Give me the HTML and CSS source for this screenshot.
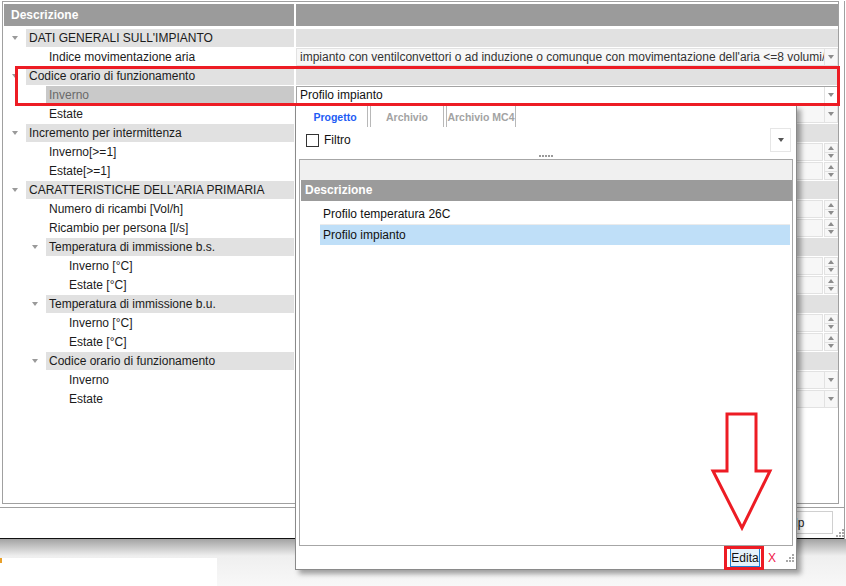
FILE: index.html
```html
<!doctype html>
<html>
  <head>
    <meta charset="utf-8" />
    <title>Codice orario di funzionamento</title>
    <link rel="stylesheet" href="styles.css">
  </head>
  <body>
    <div class="frame">
      <div class="grid">
        <div class="head"><div class="hname">Descrizione</div><div class="hval"></div></div>

        <div class="row group l1"><div class="name"><span class="tw"><i class="caret"></i></span><span class="lbl">DATI GENERALI SULL'IMPIANTO</span></div><div class="val"></div></div>
        <div class="row l1"><div class="name"><span class="tw"></span><span class="lbl">Indice movimentazione aria</span></div><div class="val"><div class="combo"><span class="txt">impianto con ventilconvettori o ad induzione o comunque con movimentazione dell'aria &lt;=8 volumi/h</span><span class="drop"><i class="tri-d"></i></span></div></div></div>
        <div class="row group l1"><div class="name"><span class="tw"><i class="caret"></i></span><span class="lbl">Codice orario di funzionamento</span></div><div class="val"></div></div>
        <div class="row l1 sel"><div class="name"><span class="tw"></span><span class="lbl">Inverno</span></div><div class="val"><div class="combo active"><span class="txt">Profilo impianto</span><span class="drop"><i class="tri-d"></i></span></div></div></div>
        <div class="row l1"><div class="name"><span class="tw"></span><span class="lbl">Estate</span></div><div class="val"><div class="combo"><span class="txt"></span><span class="drop"><i class="tri-d"></i></span></div></div></div>

        <div class="row group l1"><div class="name"><span class="tw"><i class="caret"></i></span><span class="lbl">Incremento per intermittenza</span></div><div class="val"></div></div>
        <div class="row l1"><div class="name"><span class="tw"></span><span class="lbl">Inverno[&gt;=1]</span></div><div class="val"><div class="spin"><span class="field"></span><span class="btns"><b><i class="tri-u"></i></b><b><i class="tri-d"></i></b></span></div></div></div>
        <div class="row l1"><div class="name"><span class="tw"></span><span class="lbl">Estate[&gt;=1]</span></div><div class="val"><div class="spin"><span class="field"></span><span class="btns"><b><i class="tri-u"></i></b><b><i class="tri-d"></i></b></span></div></div></div>

        <div class="row group l1"><div class="name"><span class="tw"><i class="caret"></i></span><span class="lbl">CARATTERISTICHE DELL'ARIA PRIMARIA</span></div><div class="val"></div></div>
        <div class="row l1"><div class="name"><span class="tw"></span><span class="lbl">Numero di ricambi [Vol/h]</span></div><div class="val"><div class="spin"><span class="field"></span><span class="btns"><b><i class="tri-u"></i></b><b><i class="tri-d"></i></b></span></div></div></div>
        <div class="row l1"><div class="name"><span class="tw"></span><span class="lbl">Ricambio per persona [l/s]</span></div><div class="val"><div class="spin"><span class="field"></span><span class="btns"><b><i class="tri-u"></i></b><b><i class="tri-d"></i></b></span></div></div></div>

        <div class="row group l2"><div class="name"><span class="tw"><i class="caret"></i></span><span class="lbl">Temperatura di immissione b.s.</span></div><div class="val"></div></div>
        <div class="row l2"><div class="name"><span class="tw"></span><span class="lbl">Inverno [°C]</span></div><div class="val"><div class="spin"><span class="field"></span><span class="btns"><b><i class="tri-u"></i></b><b><i class="tri-d"></i></b></span></div></div></div>
        <div class="row l2"><div class="name"><span class="tw"></span><span class="lbl">Estate [°C]</span></div><div class="val"><div class="spin"><span class="field"></span><span class="btns"><b><i class="tri-u"></i></b><b><i class="tri-d"></i></b></span></div></div></div>

        <div class="row group l2"><div class="name"><span class="tw"><i class="caret"></i></span><span class="lbl">Temperatura di immissione b.u.</span></div><div class="val"></div></div>
        <div class="row l2"><div class="name"><span class="tw"></span><span class="lbl">Inverno [°C]</span></div><div class="val"><div class="spin"><span class="field"></span><span class="btns"><b><i class="tri-u"></i></b><b><i class="tri-d"></i></b></span></div></div></div>
        <div class="row l2"><div class="name"><span class="tw"></span><span class="lbl">Estate [°C]</span></div><div class="val"><div class="spin"><span class="field"></span><span class="btns"><b><i class="tri-u"></i></b><b><i class="tri-d"></i></b></span></div></div></div>

        <div class="row group l2"><div class="name"><span class="tw"><i class="caret"></i></span><span class="lbl">Codice orario di funzionamento</span></div><div class="val"></div></div>
        <div class="row l2"><div class="name"><span class="tw"></span><span class="lbl">Inverno</span></div><div class="val"><div class="combo"><span class="txt"></span><span class="drop"><i class="tri-d"></i></span></div></div></div>
        <div class="row l2"><div class="name"><span class="tw"></span><span class="lbl">Estate</span></div><div class="val"><div class="combo"><span class="txt"></span><span class="drop"><i class="tri-d"></i></span></div></div></div>
      </div>
      <div class="footer">
        <button class="help">Help</button>
        <svg class="grip" width="8" height="8"><rect x="6" y="0" width="2" height="2"/><rect x="3" y="3" width="2" height="2"/><rect x="6" y="3" width="2" height="2"/><rect x="0" y="6" width="2" height="2"/><rect x="3" y="6" width="2" height="2"/><rect x="6" y="6" width="2" height="2"/></svg>
      </div>
    </div>
    <div class="desk">
      <div class="taskbar"><span class="tick"></span></div>
    </div>

    <!-- dropdown of the selected cell -->
    <div class="popup">
      <div class="tabs">
        <span class="tab on">Progetto</span>
        <span class="tab">Archivio</span>
        <span class="tab">Archivio MC4</span>
      </div>
      <div class="filter">
        <span class="check"></span><span class="flabel">Filtro</span>
        <span class="fdrop"><i class="tri-d dark"></i></span>
      </div>
      <div class="splitter"><i></i><i></i><i></i><i></i><i></i></div>
      <div class="list">
        <div class="ltop"></div>
        <div class="lhead">Descrizione</div>
        <div class="item">Profilo temperatura 26C</div>
        <div class="item picked">Profilo impianto</div>
      </div>
      <div class="pbar">
        <button class="edit">Edita</button>
        <span class="close">X</span>
        <svg class="grip" width="8" height="8"><rect x="6" y="0" width="2" height="2"/><rect x="3" y="3" width="2" height="2"/><rect x="6" y="3" width="2" height="2"/><rect x="0" y="6" width="2" height="2"/><rect x="3" y="6" width="2" height="2"/><rect x="6" y="6" width="2" height="2"/></svg>
      </div>
    </div>

    <!-- red annotations -->
    <div class="note note-row"></div>
    <div class="note note-edit"></div>
    <svg class="note-arrow" width="66" height="124" viewBox="710 410 66 124">
      <polygon points="727,414 756,414 756,471 770,471 742,528 713,471 727,471" fill="none" stroke="#ed1c24" stroke-width="3" />
    </svg>
  </body>
</html>
```

FILE: styles.css
```css
body {
  margin: 0;
  width: 846px;
  height: 586px;
  overflow: hidden;
  position: relative;
  background: #fff;
  font-family: "Liberation Sans", Arial, sans-serif;
  font-size: 12px;
  color: #1b1b1b;
}

.frame {
  width: 844px;
  border-right: 1px solid #a0a0a0;
}

.grid {
  margin: 1px 0 0 2px;
  width: 837px;
  height: 503px;
  box-sizing: border-box;
  border: 1px solid #a0a0a0;
  padding: 2px 0 0 1px;
}

.head {
  display: flex;
  height: 22px;
  margin-bottom: 3px;
}

.hname {
  width: 290px;
  background: #9b9b9b;
  color: #fff;
  font-weight: bold;
  line-height: 22px;
  padding-left: 7px;
  box-sizing: border-box;
}

.hval {
  flex: 1;
  margin-left: 2px;
  background: #9b9b9b;
}

.row {
  display: flex;
  height: 18px;
  margin-bottom: 1px;
}

.name {
  width: 290px;
  display: flex;
}

.tw {
  display: flex;
  align-items: center;
  justify-content: flex-end;
  padding-right: 8px;
  box-sizing: border-box;
  flex-shrink: 0;
}

.group.l1 .tw { width: 22px; }
.l1 .tw { width: 42px; }
.group.l2 .tw { width: 42px; }
.l2 .tw { width: 62px; }

.caret {
  width: 0;
  height: 0;
  border-left: 3.5px solid transparent;
  border-right: 3.5px solid transparent;
  border-top: 4px solid #9a9a9a;
}

.lbl {
  flex: 1;
  padding-left: 3px;
  line-height: 18px;
  white-space: nowrap;
  overflow: hidden;
}

.val {
  flex: 1;
  margin-left: 2px;
  min-width: 0;
}

.group .lbl,
.group .val {
  background: #e1e1e1;
}

.sel .lbl {
  background: #c9c9c9;
  color: #6a6a6a;
}

/* value editors */
.combo {
  display: flex;
  height: 18px;
  box-sizing: border-box;
  border: 1px solid #e2e2e2;
  background: #f7f7f7;
  color: #333;
}

.combo.active {
  background: #fff;
  border-color: #a3a3a3;
  color: #111;
}

.combo .txt {
  flex: 1;
  padding-left: 3px;
  line-height: 16px;
  white-space: nowrap;
  overflow: hidden;
}

.combo .drop {
  width: 12px;
  border-left: 1px solid #e2e2e2;
  display: flex;
  align-items: center;
  justify-content: center;
}

.tri-d,
.tri-u {
  width: 0;
  height: 0;
  border-left: 3.5px solid transparent;
  border-right: 3.5px solid transparent;
}

.tri-d { border-top: 4px solid #8c8c8c; }
.tri-u { border-bottom: 4px solid #8c8c8c; }
.tri-d.dark { border-top-color: #555; }

.spin {
  display: flex;
  height: 18px;
}

.spin .field {
  flex: 1;
  border: 1px solid #e2e2e2;
  background: #f7f7f7;
}

.spin .btns {
  width: 14px;
  margin-left: 1px;
  display: flex;
  flex-direction: column;
}

.spin .btns b {
  flex: 1;
  border: 1px solid #e2e2e2;
  background: #f7f7f7;
  display: flex;
  align-items: center;
  justify-content: center;
}

.spin .btns b + b {
  border-top: none;
}

.footer {
  margin-top: 3px;
  height: 32px;
  box-sizing: border-box;
  border-top: 1px solid #a0a0a0;
  border-bottom: 1px solid #111;
  display: flex;
  justify-content: flex-end;
  align-items: flex-start;
  padding: 3px 11px 0 0;
  position: relative;
}

.help {
  width: 82px;
  height: 23px;
  background: #fff;
  border: 1px solid #d0d0d0;
  font: inherit;
  color: #222;
}

.grip {
  fill: #a8a8a8;
}

.footer .grip {
  position: absolute;
  right: 0;
  bottom: 1px;
}

.desk {
  height: 47px;
  padding-top: 17px;
  box-sizing: border-box;
  background: linear-gradient(#a3a3a3, #efefef 17px, #f8f8f8);
}

.taskbar {
  width: 217px;
  height: 30px;
  background: #fff;
}

.tick {
  display: block;
  width: 2px;
  height: 5px;
  margin-top: 2px;
  background: #e8a02a;
}

/* popup */
.popup {
  position: absolute;
  left: 295px;
  top: 105px;
  width: 502px;
  height: 465px;
  box-sizing: border-box;
  border: 1px solid #8a8a8a;
  background: #fff;
  box-shadow: 4px 4px 5px rgba(0, 0, 0, 0.35);
  display: flex;
  flex-direction: column;
}

.tabs {
  height: 21px;
  display: flex;
  padding-left: 7px;
}

.tab {
  font-size: 10.5px;
  font-weight: bold;
  color: #a3a3a3;
  line-height: 22px;
  text-align: center;
  white-space: nowrap;
  border-left: 1px solid #b8b8b8;
  border-right: 1px solid #b8b8b8;
  margin-right: 2px;
}

.tab:nth-child(1) { width: 64px; border-left: none; }
.tab:nth-child(2) { width: 72px; }
.tab:nth-child(3) { width: 68px; }

.tab.on {
  color: #1d5cf5;
}

.filter {
  height: 26px;
  display: flex;
  align-items: center;
  padding: 0 5px 0 10px;
}

.check {
  width: 11px;
  height: 11px;
  border: 1px solid #333;
  background: #fff;
}

.flabel {
  margin-left: 5px;
  flex: 1;
  color: #111;
}

.fdrop {
  width: 21px;
  height: 24px;
  box-sizing: border-box;
  border: 1px solid #e6e6e6;
  display: flex;
  align-items: center;
  justify-content: center;
}

.splitter {
  height: 6px;
  display: flex;
  justify-content: center;
  align-items: center;
  gap: 1px;
}

.splitter i {
  width: 2px;
  height: 2px;
  background: #9a9a9a;
}

.list {
  height: 387px;
  margin: 0 3px;
  box-sizing: border-box;
  border: 1px solid #a6a6a6;
}

.ltop {
  height: 20px;
  background: #f0f0f0;
}

.lhead {
  height: 21px;
  margin: 0 0 3px 1px;
  background: #9b9b9b;
  color: #fff;
  font-weight: bold;
  line-height: 21px;
  padding-left: 4px;
}

.item {
  height: 20px;
  line-height: 20px;
  margin: 0 2px 0 20px;
  padding-left: 3px;
  color: #111;
}

.item + .item {
  border-top: 1px solid #ebebeb;
}

.item.picked {
  background: #bfdff8;
}

.pbar {
  height: 23px;
  display: flex;
  justify-content: flex-end;
  align-items: center;
  padding-right: 2px;
}

.edit {
  width: 30px;
  height: 19px;
  padding: 0;
  border: 1px solid #1a7fd6;
  background: #e5f1fb;
  font: inherit;
  color: #111;
  margin-right: 8px;
}

.close {
  color: #f0184a;
  margin-right: 10px;
}

/* annotations drawn over the screenshot */
.note {
  position: absolute;
  border: 3px solid #ed1c24;
  box-sizing: border-box;
}

.note-row {
  left: 15px;
  top: 66px;
  width: 825px;
  height: 40px;
}

.note-edit {
  left: 724px;
  top: 546px;
  width: 40px;
  height: 24px;
}

.note-arrow {
  position: absolute;
  left: 710px;
  top: 410px;
}
```
